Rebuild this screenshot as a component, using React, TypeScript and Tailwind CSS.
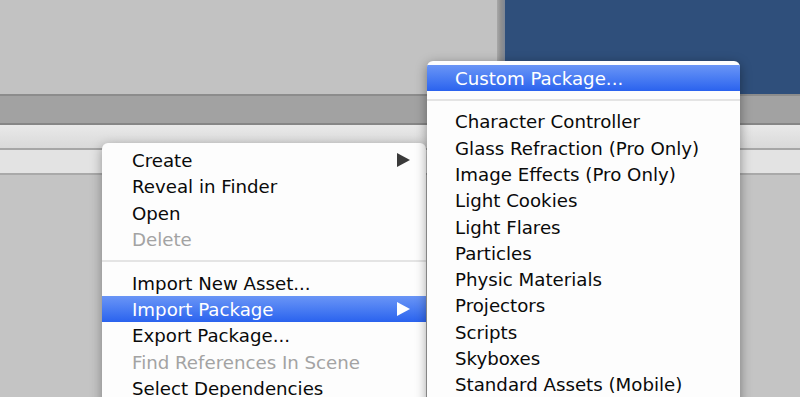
import React from "react";

const Arrow = ({ white }: { white?: boolean }) => (
  <svg width="13" height="14" viewBox="0 0 13 14" className="shrink-0">
    <polygon points="0,0 13,7 0,14" fill={white ? "#ffffff" : "#3a3a3a"} />
  </svg>
);

type Item = { label: string; disabled?: boolean; active?: boolean; arrow?: boolean };

const Row = ({ item, pl }: { item: Item; pl: string }) => (
  <div
    className={
      "flex items-center h-[26.3px] pr-[16px] " +
      pl +
      " " +
      (item.active
        ? "bg-gradient-to-b from-[#6a95f6] to-[#2a62ee] text-white"
        : item.disabled
        ? "text-[#a3a3a3]"
        : "text-[#0a0a0a]")
    }
  >
    <span className="flex-1 whitespace-nowrap pt-[2px]">{item.label}</span>
    {item.arrow && <Arrow white={item.active} />}
  </div>
);

const Sep = ({ h }: { h: string }) => (
  <div className={"flex flex-col justify-center " + h}>
    <div className="h-[2px] bg-[#e4e4e4]" />
  </div>
);

export default function App() {
  const leftTop: Item[] = [
    { label: "Create", arrow: true },
    { label: "Reveal in Finder" },
    { label: "Open" },
    { label: "Delete", disabled: true },
  ];
  const leftBottom: Item[] = [
    { label: "Import New Asset..." },
    { label: "Import Package", active: true, arrow: true },
    { label: "Export Package..." },
    { label: "Find References In Scene", disabled: true },
    { label: "Select Dependencies" },
  ];
  const sub: Item[] = [
    "Character Controller",
    "Glass Refraction (Pro Only)",
    "Image Effects (Pro Only)",
    "Light Cookies",
    "Light Flares",
    "Particles",
    "Physic Materials",
    "Projectors",
    "Scripts",
    "Skyboxes",
    "Standard Assets (Mobile)",
  ].map((label) => ({ label }));

  return (
    <div className="relative w-[800px] h-[397px] overflow-hidden bg-[#c4c4c4] font-['DejaVu_Sans',sans-serif] text-[18.2px] leading-none">
      <div className="flex flex-col h-full">
        <div className="flex h-[94px]">
          <div className="flex-1 bg-[#c2c2c2]" />
          <div className="w-[8px] bg-gradient-to-r from-[#a8a8a8] via-[#8f8f8f] to-[#7d8694]" />
          <div className="w-[295px] bg-[#2f4f7b]" />
        </div>
        <div className="h-[2px] bg-[#8c8c8c]" />
        <div className="h-[27px] bg-[#a2a2a2]" />
        <div className="h-[2px] bg-[#868686]" />
        <div className="h-[23px] bg-gradient-to-b from-[#e9e9e9] to-[#d9d9d9]" />
        <div className="h-[2px] bg-[#a6a6a6]" />
        <div className="h-[23px] bg-[#e3e3e3]" />
        <div className="h-[2px] bg-[#a9a9a9]" />
        <div className="flex-1 bg-[#c4c4c4]" />
      </div>

      {/* Left context menu */}
      <div className="absolute left-[102px] top-[143px] w-[324px] h-[280px] bg-[#fdfdfd] rounded-t-[6px] pt-[4px] shadow-[0_3px_12px_rgba(0,0,0,0.35)]">
        {leftTop.map((it) => (
          <Row key={it.label} item={it} pl="pl-[30px]" />
        ))}
        <Sep h="h-[17.5px]" />
        {leftBottom.map((it) => (
          <Row key={it.label} item={it} pl="pl-[30px]" />
        ))}
      </div>

      {/* Submenu */}
      <div className="absolute left-[427px] top-[61px] w-[313px] h-[360px] bg-[#fdfdfd] rounded-t-[6px] pt-[4px] shadow-[0_3px_12px_rgba(0,0,0,0.4)] overflow-hidden">
        <Row item={{ label: "Custom Package...", active: true }} pl="pl-[28px]" />
        <Sep h="h-[17px]" />
        {sub.map((it) => (
          <Row key={it.label} item={it} pl="pl-[28px]" />
        ))}
      </div>
    </div>
  );
}
